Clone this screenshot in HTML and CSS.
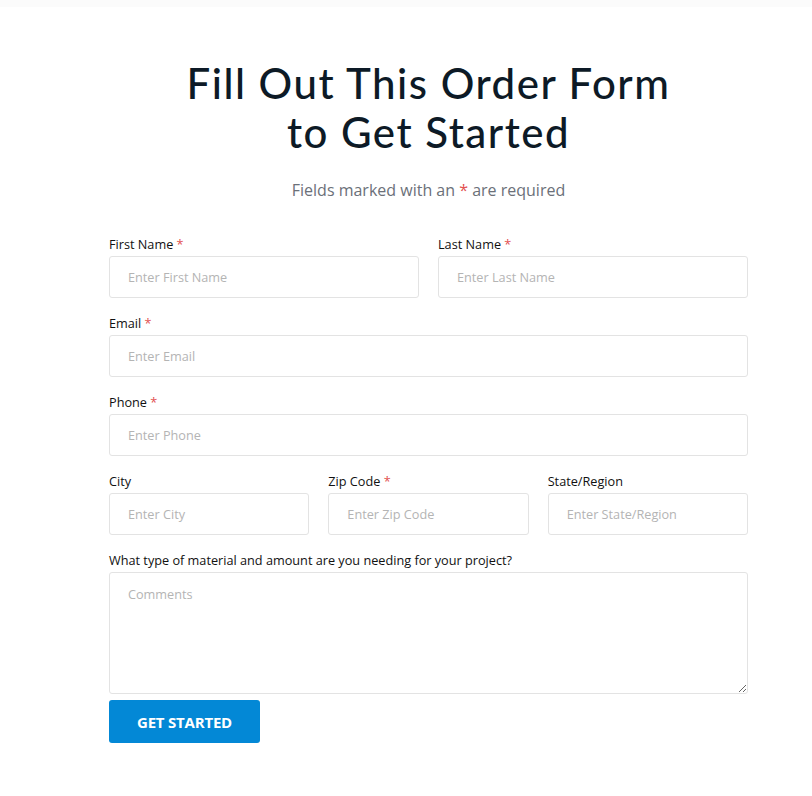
FILE: index.html
```html
<!DOCTYPE html>
<html>
<head>
<meta charset="utf-8">
<link rel="stylesheet" href="styles.css">
</head>
<body>
<div class="topband"></div>
<main class="page">
  <section class="form-wrap">
    <h1 class="title">Fill Out This Order Form<br>to Get Started</h1>
    <p class="subtitle">Fields marked with an <span class="req">*</span> are required</p>
    <form class="form">
      <div class="row two">
        <label class="field"><span class="lbl">First Name <span class="req">*</span></span><input class="inp" placeholder="Enter First Name"></label>
        <label class="field"><span class="lbl">Last Name <span class="req">*</span></span><input class="inp" placeholder="Enter Last Name"></label>
      </div>
      <div class="row">
        <label class="field"><span class="lbl">Email <span class="req">*</span></span><input class="inp" placeholder="Enter Email"></label>
      </div>
      <div class="row">
        <label class="field"><span class="lbl">Phone <span class="req">*</span></span><input class="inp" placeholder="Enter Phone"></label>
      </div>
      <div class="row three">
        <label class="field"><span class="lbl">City</span><input class="inp" placeholder="Enter City"></label>
        <label class="field"><span class="lbl">Zip Code <span class="req">*</span></span><input class="inp" placeholder="Enter Zip Code"></label>
        <label class="field"><span class="lbl">State/Region</span><input class="inp" placeholder="Enter State/Region"></label>
      </div>
      <div class="row last">
        <label class="field"><span class="lbl">What type of material and amount are you needing for your project?</span><textarea class="inp ta" placeholder="Comments"></textarea></label>
      </div>
      <button type="button" class="btn">GET STARTED</button>
    </form>
  </section>
</main>
</body>
</html>
```

FILE: styles.css
```css
html, body {
  margin: 0;
  padding: 0;
  background: #ffffff;
}
body {
  font-family: "Open Sans", "Liberation Sans", sans-serif;
  color: #111;
}
.topband {
  height: 7px;
  background: #fbfbfb;
}
.page {
  padding-left: 109px;
}
.form-wrap {
  width: 639px;
  padding-top: 52px;
}
.title {
  margin: 0;
  text-align: center;
  font-family: "Lato", "Open Sans", sans-serif;
  font-weight: 500;
  font-size: 42px;
  line-height: 49px;
  color: #0d1a26;
  letter-spacing: 1.5px;
}
.subtitle {
  margin: 21px 0 0;
  text-align: center;
  font-size: 16px;
  line-height: 24px;
  color: #6b7079;
}
.req {
  color: #e2504f;
}
.form {
  margin-top: 33px;
}
.row {
  display: grid;
  grid-template-columns: minmax(0, 1fr);
  column-gap: 19px;
  margin-bottom: 16px;
}
.row.two {
  grid-template-columns: repeat(2, minmax(0, 1fr));
}
.row.three {
  grid-template-columns: repeat(3, minmax(0, 1fr));
}
.row.last {
  margin-bottom: 6px;
}
.field {
  display: flex;
  flex-direction: column;
  min-width: 0;
}
.lbl {
  font-size: 12.7px;
  line-height: 18px;
  margin-bottom: 3px;
  color: #111;
}
.inp {
  box-sizing: border-box;
  width: 100%;
  min-width: 0;
  height: 42px;
  border: 1px solid #e3e3e3;
  border-radius: 3px;
  padding: 0 18px;
  font-family: "Open Sans", "Liberation Sans", sans-serif;
  font-size: 12.7px;
  color: #333;
  background: #fff;
  outline: none;
}
.inp::placeholder {
  color: #b4b4b4;
}
.ta {
  height: 122px;
  padding-top: 12px;
  resize: vertical;
}
.btn {
  width: 151px;
  height: 43px;
  border: none;
  border-radius: 3px;
  background: #0388d6;
  color: #fff;
  font-family: "Open Sans", "Liberation Sans", sans-serif;
  font-weight: 700;
  font-size: 15px;
  letter-spacing: -0.2px;
  cursor: pointer;
}
```
